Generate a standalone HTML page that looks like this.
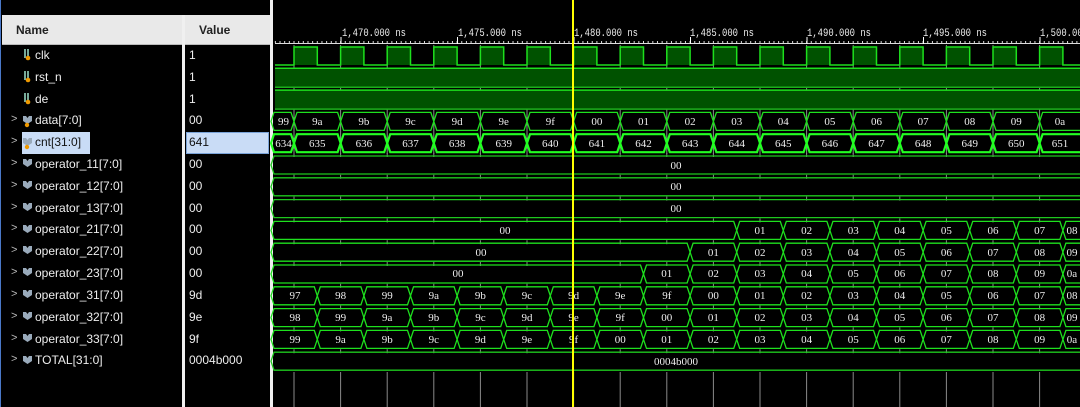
<!DOCTYPE html>
<html><head><meta charset="utf-8"><style>
*{margin:0;padding:0;box-sizing:border-box}
body{width:1080px;height:407px;background:#000;overflow:hidden;position:relative;font-family:"Liberation Sans",sans-serif}
#left{position:absolute;left:0;top:0;width:270px;height:407px;background:#000;border-left:1px solid #4a78c8}
#hdr{position:absolute;left:1px;top:15px;width:269px;height:30px;background:#e9e9e9;border-bottom:1px solid #bbb}
#hdr span{position:absolute;top:8px;font-size:12px;font-weight:bold;color:#222}
.sep{position:absolute;background:#f0f0f0}
.row{position:absolute;left:0;height:22px;width:270px;color:#eee;font-size:12px}
.row .ar{position:absolute;left:10px;top:3px;color:#bbb;font-size:11px}
.row .nm{position:absolute;left:34px;top:3px}
.row .vl{position:absolute;left:188px;top:3px}
.sel{position:absolute;left:21px;top:132px;width:68px;height:22px;background:#c9dcf6}
.selv{position:absolute;left:185px;top:132px;width:83px;height:22px;background:#c9dcf6;border:1px solid #7aa3d8}
svg{position:absolute;left:0;top:0}
svg text{font-family:"Liberation Serif",serif;font-size:11px;fill:#eee;text-anchor:middle}
svg text.r{font-family:"Liberation Mono",monospace;text-anchor:start}
</style></head><body>
<div id="left">
<div id="hdr"><span style="left:14px">Name</span><span style="left:197px">Value</span></div>
<div class="sel"></div><div class="selv"></div>
<div class="row" style="top:45px"><span class="nm">clk</span><span class="vl">1</span></div>
<div class="row" style="top:67px"><span class="nm">rst_n</span><span class="vl">1</span></div>
<div class="row" style="top:89px"><span class="nm">de</span><span class="vl">1</span></div>
<div class="row" style="top:110px"><span class="ar">&gt;</span><span class="nm">data[7:0]</span><span class="vl">00</span></div>
<div class="row" style="top:132px"><span class="ar">&gt;</span><span class="nm" style="color:#111">cnt[31:0]</span><span class="vl" style="color:#111">641</span></div>
<div class="row" style="top:154px"><span class="ar">&gt;</span><span class="nm">operator_11[7:0]</span><span class="vl">00</span></div>
<div class="row" style="top:176px"><span class="ar">&gt;</span><span class="nm">operator_12[7:0]</span><span class="vl">00</span></div>
<div class="row" style="top:198px"><span class="ar">&gt;</span><span class="nm">operator_13[7:0]</span><span class="vl">00</span></div>
<div class="row" style="top:219px"><span class="ar">&gt;</span><span class="nm">operator_21[7:0]</span><span class="vl">00</span></div>
<div class="row" style="top:241px"><span class="ar">&gt;</span><span class="nm">operator_22[7:0]</span><span class="vl">00</span></div>
<div class="row" style="top:263px"><span class="ar">&gt;</span><span class="nm">operator_23[7:0]</span><span class="vl">00</span></div>
<div class="row" style="top:285px"><span class="ar">&gt;</span><span class="nm">operator_31[7:0]</span><span class="vl">9d</span></div>
<div class="row" style="top:307px"><span class="ar">&gt;</span><span class="nm">operator_32[7:0]</span><span class="vl">9e</span></div>
<div class="row" style="top:329px"><span class="ar">&gt;</span><span class="nm">operator_33[7:0]</span><span class="vl">9f</span></div>
<div class="row" style="top:350px"><span class="ar">&gt;</span><span class="nm">TOTAL[31:0]</span><span class="vl">0004b000</span></div>
<div class="sep" style="left:181px;top:15px;width:3px;height:392px"></div>
</div>
<div class="sep" style="left:270px;top:0;width:3px;height:407px"></div>
<svg id="icons" width="270" height="407">
<g id="ico"></g>
</svg>
<svg id="w" width="1080" height="407">
<g id="g"></g>
<g>
<text class="r" x="342" y="36" textLength="64" lengthAdjust="spacingAndGlyphs">1,470.000 ns</text>
<text class="r" x="458" y="36" textLength="64" lengthAdjust="spacingAndGlyphs">1,475.000 ns</text>
<text class="r" x="574" y="36" textLength="64" lengthAdjust="spacingAndGlyphs">1,480.000 ns</text>
<text class="r" x="690" y="36" textLength="64" lengthAdjust="spacingAndGlyphs">1,485.000 ns</text>
<text class="r" x="807" y="36" textLength="64" lengthAdjust="spacingAndGlyphs">1,490.000 ns</text>
<text class="r" x="923" y="36" textLength="64" lengthAdjust="spacingAndGlyphs">1,495.000 ns</text>
<text class="r" x="1040" y="36" textLength="64" lengthAdjust="spacingAndGlyphs">1,500.000 ns</text>
</g>
<g>
<text x="283.5" y="125">99</text><text x="317.3" y="125">9a</text><text x="363.9" y="125">9b</text><text x="410.5" y="125">9c</text><text x="457.1" y="125">9d</text><text x="503.7" y="125">9e</text><text x="550.3" y="125">9f</text><text x="596.9" y="125">00</text><text x="643.5" y="125">01</text><text x="690.1" y="125">02</text><text x="736.7" y="125">03</text><text x="783.3" y="125">04</text><text x="829.9" y="125">05</text><text x="876.5" y="125">06</text><text x="923.1" y="125">07</text><text x="969.7" y="125">08</text><text x="1016.3" y="125">09</text><text x="1060" y="125">0a</text>
<text x="283.5" y="147">634</text><text x="317.3" y="147">635</text><text x="363.9" y="147">636</text><text x="410.5" y="147">637</text><text x="457.1" y="147">638</text><text x="503.7" y="147">639</text><text x="550.3" y="147">640</text><text x="596.9" y="147">641</text><text x="643.5" y="147">642</text><text x="690.1" y="147">643</text><text x="736.7" y="147">644</text><text x="783.3" y="147">645</text><text x="829.9" y="147">646</text><text x="876.5" y="147">647</text><text x="923.1" y="147">648</text><text x="969.7" y="147">649</text><text x="1016.3" y="147">650</text><text x="1060" y="147">651</text>
<text x="676" y="169">00</text><text x="676" y="190">00</text><text x="676" y="212">00</text>
<text x="505" y="234">00</text><text x="760" y="234">01</text><text x="806.6" y="234">02</text><text x="853.2" y="234">03</text><text x="899.8" y="234">04</text><text x="946.4" y="234">05</text><text x="993" y="234">06</text><text x="1039.6" y="234">07</text><text x="1072" y="234">08</text>
<text x="481" y="256">00</text><text x="713.4" y="256">01</text><text x="760" y="256">02</text><text x="806.6" y="256">03</text><text x="853.2" y="256">04</text><text x="899.8" y="256">05</text><text x="946.4" y="256">06</text><text x="993" y="256">07</text><text x="1039.6" y="256">08</text><text x="1072" y="256">09</text>
<text x="458" y="277">00</text><text x="666.8" y="277">01</text><text x="713.4" y="277">02</text><text x="760" y="277">03</text><text x="806.6" y="277">04</text><text x="853.2" y="277">05</text><text x="899.8" y="277">06</text><text x="946.4" y="277">07</text><text x="993" y="277">08</text><text x="1039.6" y="277">09</text><text x="1072" y="277">0a</text>
<text x="295" y="299">97</text><text x="340.6" y="299">98</text><text x="387.2" y="299">99</text><text x="433.8" y="299">9a</text><text x="480.4" y="299">9b</text><text x="527" y="299">9c</text><text x="573.6" y="299">9d</text><text x="620.2" y="299">9e</text><text x="666.8" y="299">9f</text><text x="713.4" y="299">00</text><text x="760" y="299">01</text><text x="806.6" y="299">02</text><text x="853.2" y="299">03</text><text x="899.8" y="299">04</text><text x="946.4" y="299">05</text><text x="993" y="299">06</text><text x="1039.6" y="299">07</text><text x="1072" y="299">08</text>
<text x="295" y="321">98</text><text x="340.6" y="321">99</text><text x="387.2" y="321">9a</text><text x="433.8" y="321">9b</text><text x="480.4" y="321">9c</text><text x="527" y="321">9d</text><text x="573.6" y="321">9e</text><text x="620.2" y="321">9f</text><text x="666.8" y="321">00</text><text x="713.4" y="321">01</text><text x="760" y="321">02</text><text x="806.6" y="321">03</text><text x="853.2" y="321">04</text><text x="899.8" y="321">05</text><text x="946.4" y="321">06</text><text x="993" y="321">07</text><text x="1039.6" y="321">08</text><text x="1072" y="321">09</text>
<text x="295" y="343">99</text><text x="340.6" y="343">9a</text><text x="387.2" y="343">9b</text><text x="433.8" y="343">9c</text><text x="480.4" y="343">9d</text><text x="527" y="343">9e</text><text x="573.6" y="343">9f</text><text x="620.2" y="343">00</text><text x="666.8" y="343">01</text><text x="713.4" y="343">02</text><text x="760" y="343">03</text><text x="806.6" y="343">04</text><text x="853.2" y="343">05</text><text x="899.8" y="343">06</text><text x="946.4" y="343">07</text><text x="993" y="343">08</text><text x="1039.6" y="343">09</text><text x="1072" y="343">0a</text>
<text x="676" y="365">0004b000</text>
</g>
<rect x="572" y="0" width="2" height="407" fill="#ff0"/>
</svg>
<script>
var g=document.getElementById('g'),h='';
function R(i){return 294+46.6*i}function F(i){return 317.3+46.6*i}
var X0=275,X1=1080;
function T(i){return 47+21.8*i}
for(var i=0;i<17;i++){
 h+='<line x1="'+R(i)+'" y1="45" x2="'+R(i)+'" y2="154" stroke="#8a8a8a"/>';
 h+='<line x1="'+R(i)+'" y1="372" x2="'+R(i)+'" y2="407" stroke="#8a8a8a"/>';
 for(var r=5;r<15;r++)h+='<line x1="'+R(i)+'" y1="'+(T(r)-3)+'" x2="'+R(i)+'" y2="'+(T(r)+1)+'" stroke="#8a8a8a"/>';
}
h+='<line x1="'+X0+'" y1="43.5" x2="'+X1+'" y2="43.5" stroke="#ddd"/>';
for(var x=294-46.6;x<X1;x+=4.66)if(x>X0)h+='<line x1="'+x+'" y1="41" x2="'+x+'" y2="43" stroke="#ddd"/>';
for(var k=0;k<9;k++){var x=341-116.5+116.5*k;if(x>X0)h+='<line x1="'+x+'" y1="37" x2="'+x+'" y2="44" stroke="#fff"/>';}
var p='M'+X0+' 65';
for(var i=0;i<17;i++){p+=' L'+R(i)+' 65 L'+R(i)+' 47 L'+F(i)+' 47 L'+F(i)+' 65';}
p+=' L'+X1+' 65';
h+='<path d="'+p+' Z" fill="#005200" stroke="none"/>';
h+='<path d="'+p+'" fill="none" stroke="#1de01d" stroke-width="1.5"/>';
[68.3,90.1].forEach(function(t){h+='<rect x="'+X0+'" y="'+t+'" width="'+(X1-X0)+'" height="19" fill="#005200"/><line x1="'+X0+'" y1="'+t+'" x2="'+X1+'" y2="'+t+'" stroke="#1de01d" stroke-width="1.5"/><line x1="'+X0+'" y1="'+(t+19)+'" x2="'+X1+'" y2="'+(t+19)+'" stroke="#1cb01c" stroke-width="1.5"/>';});
function bus(t,edges,w,c){var b=t+18,m=t+9,e=[X0-4].concat(edges).concat([X1+4]);
 for(var j=0;j<e.length-1;j++){var a=e[j],z=e[j+1];
  h+='<polygon points="'+a+','+m+' '+(a+3)+','+t+' '+(z-3)+','+t+' '+z+','+m+' '+(z-3)+','+b+' '+(a+3)+','+b+'" fill="none" stroke="'+c+'" stroke-width="'+w+'"/>';}}
var re=[],fe=[];for(var i=0;i<17;i++){re.push(R(i));fe.push(F(i));}
bus(T(3),re,1.3,'#1ee01e');
bus(T(4),re,2.2,'#22ff22');
bus(T(5),[],1.3,'#1ec81e');bus(T(6),[],1.3,'#1ec81e');bus(T(7),[],1.3,'#1ec81e');
bus(T(8),fe.slice(9),1.3,'#1ee01e');
bus(T(9),fe.slice(8),1.3,'#1ee01e');
bus(T(10),fe.slice(7),1.3,'#1ee01e');
bus(T(11),fe,1.3,'#1ee01e');bus(T(12),fe,1.3,'#1ee01e');bus(T(13),fe,1.3,'#1ee01e');
bus(T(14),[],1.3,'#1ec81e');
g.innerHTML=h;
var ic='';
[55,77,99].forEach(function(y){ic+='<rect x="24" y="'+(y-6)+'" width="2" height="9" fill="#7a9"/><rect x="27" y="'+(y-6)+'" width="2" height="9" fill="#7a9"/><circle cx="28" cy="'+(y+3)+'" r="2.3" fill="#e90"/>';});
[121,143,164,186,208,230,251,273,295,317,339,361].forEach(function(y){ic+='<path d="M23 '+(y-5)+' h3 l1.5 2 l1.5 -2 h3 v5 l-4.5 3 l-4.5 -3 z" fill="#9ab"/>';});
ic+='<circle cx="27" cy="125" r="2.2" fill="#e90"/><circle cx="27" cy="147" r="2.2" fill="#e90"/>';
document.getElementById('ico').innerHTML=ic;
</script>
</body></html>
